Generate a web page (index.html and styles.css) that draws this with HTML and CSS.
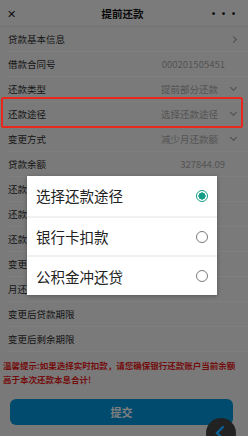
FILE: index.html
```html
<!DOCTYPE html>
<html lang="zh-CN">
<head>
    <meta charset="UTF-8">
    <meta name="viewport" content="width=device-width, initial-scale=1.0">
    <title>提前还款</title>
    <link rel="stylesheet" href="styles.css">
</head>
<body>

    <div class="page">
        <header class="topbar">
            <span class="topbar-close">&#x2715;</span>
            <span class="topbar-title">提前还款</span>
            <span class="topbar-more">&middot;&middot;&middot;</span>
        </header>

        <ul class="form">
            <li class="row"><span class="label">贷款基本信息</span><span class="value"></span><span class="arrow arrow-right"></span></li>
            <li class="row row-plain"><span class="label">借款合同号</span><span class="value">000201505451</span></li>
            <li class="row"><span class="label">还款类型</span><span class="value">提前部分还款</span><span class="arrow arrow-down"></span></li>
            <li class="row"><span class="label">还款途径</span><span class="value">选择还款途径</span><span class="arrow arrow-down"></span></li>
            <li class="row"><span class="label">变更方式</span><span class="value">减少月还款额</span><span class="arrow arrow-down"></span></li>
            <li class="row row-plain"><span class="label">贷款余额</span><span class="value">327844.09</span></li>
            <li class="row row-plain"><span class="label">还款本金</span><span class="value"></span></li>
            <li class="row row-plain"><span class="label">还款利息</span><span class="value"></span></li>
            <li class="row row-plain"><span class="label">还款总额</span><span class="value"></span></li>
            <li class="row row-plain"><span class="label">变更后</span><span class="value"></span></li>
            <li class="row row-plain"><span class="label">月还款</span><span class="value"></span></li>
            <li class="row row-plain"><span class="label">变更后贷款期限</span><span class="value"></span></li>
            <li class="row row-plain"><span class="label">变更后剩余期限</span><span class="value"></span></li>
        </ul>

        <p class="tip">温馨提示:如果选择实时扣款，请您确保银行还款账户当前余额高于本次还款本息合计!</p>

        <div class="submit-wrap">
            <button class="submit">提交</button>
        </div>
    </div>

    <div class="mask"></div>

    <div class="highlight"></div>

    <div class="dialog">
        <div class="option"><span>选择还款途径</span><span class="radio checked"></span></div>
        <div class="option"><span>银行卡扣款</span><span class="radio"></span></div>
        <div class="option"><span>公积金冲还贷</span><span class="radio"></span></div>
    </div>

    <div class="back-btn">
        <svg width="30" height="30" viewBox="0 0 30 30"><path d="M17 9 L11 15 L17 21" fill="none" stroke="#0a5f94" stroke-width="2.4" stroke-linecap="round"/></svg>
    </div>

</body>
</html>
```

FILE: styles.css
```css
* {
    box-sizing: border-box;
}

body {
    margin: 0;
    width: 248px;
    height: 436px;
    overflow: hidden;
    position: relative;
    background-color: #f3f3f3;
    font-family: "Noto Sans CJK SC", "Noto Sans", sans-serif;
    color: #333;
}

.page {
    height: 436px;
}

.topbar {
    height: 27px;
    display: flex;
    align-items: center;
    justify-content: space-between;
    padding: 0 10px 0 7px;
    background-color: #f7f7f7;
    border-bottom: 1px solid #e6e6e6;
}

.topbar-close {
    font-size: 11px;
    color: #222;
    width: 30px;
}

.topbar-title {
    font-size: 10.5px;
    font-weight: bold;
    color: #111;
}

.topbar-more {
    width: 30px;
    text-align: right;
    font-size: 11px;
    font-weight: bold;
    letter-spacing: -1px;
    color: #111;
}

.form {
    list-style: none;
    margin: 0;
    padding: 0 0 0 8px;
    background-color: #f5f5f5;
}

.row {
    height: 25px;
    display: flex;
    align-items: center;
    padding-right: 12px;
    border-bottom: 1px solid #fff;
    font-size: 9.5px;
}

.row-plain {
    padding-right: 23px;
}

.label {
    color: #2e2e2e;
}

.value {
    margin-left: auto;
    color: #a8a8a8;
}

.arrow {
    width: 5px;
    height: 5px;
    margin-left: 13px;
    border-right: 1px solid #999;
    border-bottom: 1px solid #999;
}

.arrow-right {
    transform: rotate(-45deg);
}

.arrow-down {
    transform: rotate(45deg);
    margin-top: -3px;
}

.tip {
    margin: 6px 0 0;
    padding: 0 12px 0 3px;
    font-size: 8.5px;
    line-height: 14px;
    color: #e61a1a;
    font-weight: bold;
}

.submit-wrap {
    padding: 12px 15px 0 10px;
}

.submit {
    width: 100%;
    height: 26px;
    border: none;
    border-radius: 6px;
    background-color: #0096dc;
    color: #fff;
    font-family: inherit;
    font-size: 11px;
    font-weight: bold;
}

.mask {
    position: absolute;
    inset: 0;
    background-color: rgba(0, 0, 0, 0.5);
}

.highlight {
    position: absolute;
    left: 1px;
    top: 97px;
    width: 242px;
    height: 31px;
    border: 2px solid #e8281c;
    border-radius: 2px;
}

.dialog {
    position: absolute;
    left: 27px;
    top: 176px;
    width: 190px;
    background-color: #fff;
    box-shadow: 0 1px 4px rgba(0, 0, 0, 0.3);
}

.option {
    height: 39.7px;
    display: flex;
    align-items: center;
    justify-content: space-between;
    padding: 0 9px 0 9px;
    font-size: 14.5px;
    color: #222;
    border-top: 2px solid #f1f1f1;
}

.option:first-child {
    border-top: none;
}

.radio {
    width: 12px;
    height: 12px;
    border: 1.5px solid #7a7a7a;
    border-radius: 50%;
}

.radio.checked {
    border-color: #139c86;
    background: radial-gradient(circle, #139c86 0 3.4px, transparent 3.8px);
}

.back-btn {
    position: absolute;
    left: 206px;
    top: 418px;
    width: 30px;
    height: 30px;
    border-radius: 50%;
    background-color: #222;
    display: flex;
    align-items: center;
    justify-content: center;
}
```
